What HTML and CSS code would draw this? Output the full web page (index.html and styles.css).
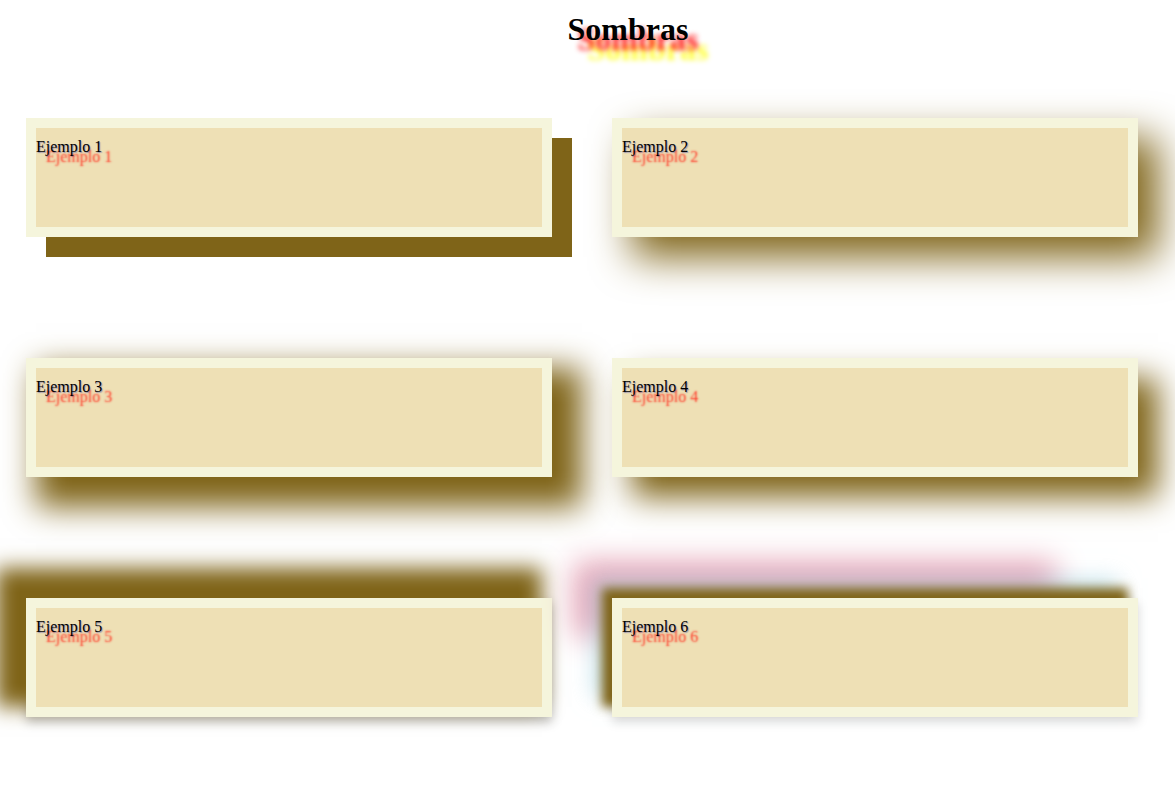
FILE: index.html
```html
<!DOCTYPE html>
<html lang="es">
<head>
<meta charset="utf-8">
<title>Sombras</title>
<link rel="stylesheet" href="styles.css">
</head>
<body>
<h1 class="title">Sombras</h1>
<div class="grid">
  <div class="box s1">Ejemplo 1</div>
  <div class="box s2">Ejemplo 2</div>
  <div class="box s3">Ejemplo 3</div>
  <div class="box s4">Ejemplo 4</div>
  <div class="box s5">Ejemplo 5</div>
  <div class="box s6">Ejemplo 6</div>
</div>
</body>
</html>
```
FILE: styles.css
```css
body {
  margin: 0;
  background: #fff;
  font-family: "Liberation Serif", "Times New Roman", serif;
  color: #000;
}

.title {
  margin: 11px 0 0 81px;
  font-size: 32px;
  font-weight: bold;
  line-height: 36px;
  text-align: center;
  text-shadow: 10px 10px 5px #ff1a1a, 20px 20px 5px #ffff33;
}

.grid {
  display: grid;
  grid-template-columns: 526px 526px;
  column-gap: 60px;
  row-gap: 121px;
  padding-left: 26px;
  margin-top: 71px;
  padding-bottom: 60px;
}

.box {
  box-sizing: border-box;
  height: 119px;
  border: 10px solid #f5f5dc;
  background: #eee0b5;
  padding-top: 10px;
  font-size: 16px;
  line-height: 18px;
  text-shadow: 10px 10px 2px #ff3a28, 1px 1px 1px rgba(0, 0, 160, 0.35);
}

.s1 { box-shadow: 20px 20px 0 #7f6418; }
.s2 { box-shadow: 20px 20px 40px #7f6418; }
.s3 { box-shadow: 20px 20px 30px 10px #7f6418; }
.s4 { box-shadow: 20px 20px 30px #7f6418; }
.s5 { box-shadow: -20px -20px 20px 10px #7f6418, 0 5px 10px rgba(0, 0, 0, 0.25); }
.s6 {
  box-shadow: -10px -10px 10px #7f6418,
              -20px -20px 20px rgba(173, 216, 230, 0.6),
              -60px -58px 30px -22px #e6a2b5,
              0 5px 10px rgba(0, 0, 0, 0.15);
}
```
